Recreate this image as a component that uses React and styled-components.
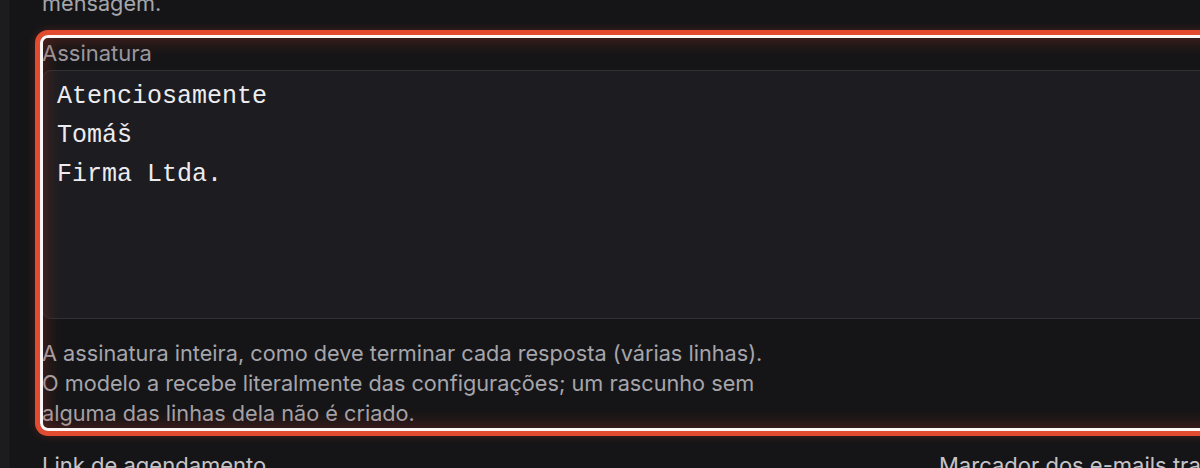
import styled, { createGlobalStyle } from 'styled-components'

const GlobalStyle = createGlobalStyle`
  html, body {
    margin: 0;
    padding: 0;
    background: #151517;
    overflow: hidden;
  }
  #root {
    height: 468px;
  }
`

const Page = styled.div`
  display: flex;
  height: 468px;
  overflow: hidden;
  font-family: "Inter", "Noto Sans", sans-serif;
  background: #151517;
`

const SideEdge = styled.aside`
  flex: 0 0 9px;
  background: #1c1c1f;
  border-right: 1px solid #18181a;
`

const Main = styled.main`
  flex: 1;
  display: flex;
  flex-direction: column;
  gap: 21px;
  padding-left: 32px;
  min-width: 1770px;
`

const Help = styled.p`
  margin: ${(p) => (p.$lead ? '-12px 0 0' : '0')};
  max-width: 732px;
  font-size: 21.7px;
  line-height: 30px;
  color: #a5a5ab;
`

const Field = styled.div`
  position: relative;
  display: flex;
  flex-direction: column;

  &::after {
    content: '';
    position: absolute;
    top: -4px;
    left: -2px;
    right: -2px;
    bottom: -3px;
    border: 3px solid #fbf7f6;
    border-radius: 8px;
    box-shadow: 0 0 0 5px #e24b30, 0 0 10px 5px rgba(226, 75, 48, 0.22),
      inset 0 0 20px rgba(190, 60, 40, 0.42);
    pointer-events: none;
  }
`

const Label = styled.label`
  font-size: 22px;
  line-height: 28px;
  margin-bottom: 3px;
  color: ${(p) => (p.$dim ? '#9a9aa0' : '#c4c4c9')};
`

const SignatureBox = styled.textarea`
  box-sizing: border-box;
  height: 249px;
  width: 100%;
  margin: 0;
  padding: 6px 14px;
  border: 1px solid #303035;
  border-radius: 9px;
  background: #1d1d21;
  color: #ececf0;
  font-family: "Liberation Mono", "DejaVu Sans Mono", monospace;
  font-size: 25px;
  line-height: 39px;
  resize: none;
  outline: none;
`

const FieldHelp = styled(Help)`
  margin-top: 19px;
`

const Columns = styled.div`
  display: grid;
  grid-template-columns: 873px 873px;
  gap: 24px;
  margin-top: 2px;
`

const SIGNATURE = `Atenciosamente
Tomáš
Firma Ltda.`

export default function App() {
  return (
    <>
      <GlobalStyle />
      <Page>
        <SideEdge />
        <Main>
          <Help $lead>mensagem.</Help>
          <Field>
            <Label $dim htmlFor="signature">Assinatura</Label>
            <SignatureBox id="signature" defaultValue={SIGNATURE} spellCheck={false} />
            <FieldHelp>
              A assinatura inteira, como deve terminar cada resposta (várias linhas).
              O modelo a recebe literalmente das configurações; um rascunho sem
              alguma das linhas dela não é criado.
            </FieldHelp>
          </Field>
          <Columns>
            <Label>Link de agendamento</Label>
            <Label>Marcador dos e-mails tratados</Label>
          </Columns>
        </Main>
      </Page>
    </>
  )
}
